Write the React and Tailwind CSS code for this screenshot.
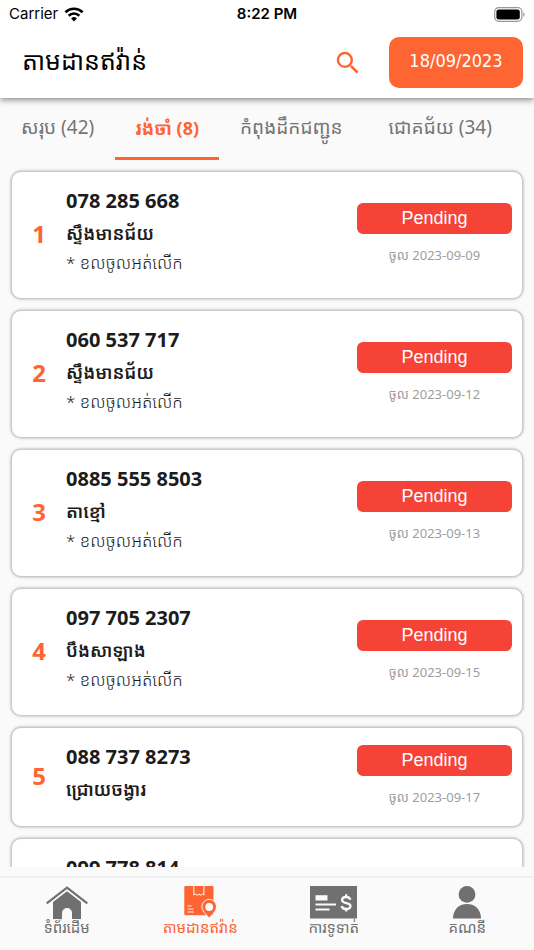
import { MdSearch } from "react-icons/md";

const tabs = [
  { id: "all", label: "សរុប (42)" },
  { id: "pending", label: "រង់ចាំ (8)" },
  { id: "shipping", label: "កំពុងដឹកជញ្ជូន\u00a0" },
  { id: "success", label: "ជោគជ័យ (34)" },
];

const packages = [
  { phone: "078 285 668", place: "ស្ទឹងមានជ័យ", note: "* ខលចូលអត់លើក", date: "2023-09-09" },
  { phone: "060 537 717", place: "ស្ទឹងមានជ័យ", note: "* ខលចូលអត់លើក", date: "2023-09-12" },
  { phone: "0885 555 8503", place: "តាខ្មៅ", note: "* ខលចូលអត់លើក", date: "2023-09-13" },
  { phone: "097 705 2307", place: "បឹងសាឡាង", note: "* ខលចូលអត់លើក", date: "2023-09-15" },
  { phone: "088 737 8273", place: "ជ្រោយចង្វារ", date: "2023-09-17" },
  { phone: "099 778 814", place: "តាខ្មៅ", note: "* ខលចូលអត់លើក", date: "2023-09-17" },
];

function WifiIcon() {
  return (
    <svg viewBox="0 0 20 15" className="h-[15px] w-5" fill="none" stroke="black">
      <path d="M1.4 5.2a12.4 12.4 0 0 1 17.2 0" strokeWidth="2.7" />
      <path d="M4.7 8.7a7.6 7.6 0 0 1 10.6 0" strokeWidth="2.6" />
      <path d="M10 14.6 7.1 11.5a4.2 4.2 0 0 1 5.8 0z" fill="black" stroke="none" />
    </svg>
  );
}

function BatteryIcon() {
  return (
    <svg viewBox="0 0 32 15" className="h-[15px] w-8">
      <rect x="0.7" y="0.7" width="27.2" height="13.6" rx="4" fill="none" stroke="#999" strokeWidth="1.2" />
      <rect x="2.4" y="2.4" width="23.4" height="10.2" rx="2.4" fill="black" />
      <path d="M29.3 5.2c1.8.7 1.8 3.9 0 4.6z" fill="#999" />
    </svg>
  );
}

function HomeIcon() {
  return (
    <svg viewBox="0 0 42 33" className="h-[33px] w-[42px]">
      <path d="M.7 17.4 21 1.7l20.3 15.7" fill="none" stroke="currentColor" strokeWidth="2.2" />
      <path d="M7 16 21 5.2 35 16v17h-9v-6a5 5 0 0 0-10 0v6H7z" fill="currentColor" />
    </svg>
  );
}

function PackageIcon() {
  return (
    <svg viewBox="0 0 33 33" className="h-[33px] w-[33px]">
      <rect x="0.3" y="0" width="29.2" height="29.3" rx="1.2" fill="currentColor" />
      <path d="M9.8 0v9l1.7-1 1.7 1.4L15 8l1.7 1.4L18.400 8l1.500 1V0" fill="none" stroke="#fafafa" strokeWidth="1" />
      <path d="M3.5 20h4M3.5 23h6M3.5 26H10" stroke="#fafafa" strokeWidth="1" />
      <path
        d="M25.200 13.300a7.300 7.300 0 0 1 7.300 7.300c0 4.400-4.300 7.700-7.300 11.700-3-4-7.300-7.300-7.300-11.700a7.300 7.300 0 0 1 7.300-7.300z"
        fill="currentColor"
        stroke="#fafafa"
        strokeWidth="1"
      />
      <circle cx="25.2" cy="21" r="3.900" fill="#fafafa" />
    </svg>
  );
}

function PaymentIcon() {
  return (
    <svg viewBox="0 0 47 33" className="h-[33px] w-[47px]">
      <path d="M0 0h47v32.5H0z" fill="currentColor" />
      <path d="M5.5 9.2h12v5.3h-12z" fill="#fafafa" />
      <path d="M5.5 18.5H26M5.5 23.6h14" stroke="#fafafa" strokeWidth="2" />
      <path
        d="M40.3 13.8c-.4-1.800-1.900-2.800-4-2.800-2.500 0-4.200 1.200-4.200 3 0 4.300 8.400 2 8.400 6 0 1.900-1.800 3-4.300 3s-4.200-1.100-4.500-3M36.200 8.200V11M36.200 23v2.600"
        fill="none"
        stroke="#fafafa"
        strokeWidth="2.3"
      />
    </svg>
  );
}

function AccountIcon() {
  return (
    <svg viewBox="0 0 28 33" className="h-[33px] w-7" fill="currentColor">
      <circle cx="14" cy="8.4" r="8.4" />
      <path d="M0 32.5C0 24 5.5 18 14 18s14 6 14 14.5z" />
    </svg>
  );
}

const navItems = [
  { id: "home", label: "ទំព័រដើម", Icon: HomeIcon },
  { id: "tracking", label: "តាមដានឥវ៉ាន់", Icon: PackageIcon },
  { id: "payment", label: "ការទូទាត់", Icon: PaymentIcon },
  { id: "account", label: "គណនី", Icon: AccountIcon },
];

function PackageCard({ number, phone, place, note, date }) {
  return (
    <li className="flex shrink-0 items-center rounded-[10px] border border-[#cacaca] bg-white pr-[10px] shadow-[0_0_3px_rgba(0,0,0,0.35)]">
      <span className="w-[54px] shrink-0 pb-[2px] text-center text-2xl font-bold text-[#ff6433]">{number}</span>
      <div className="min-w-0 flex-1 pt-[13px] pb-[21px] text-[#1c1c1c]">
        <p className="text-xl leading-[32px] font-bold">{phone}</p>
        <p className="text-lg leading-[32px] font-semibold">{place}</p>
        {note && <p className="text-[17px] leading-[28px] font-light">{note}</p>}
      </div>
      <div className="flex w-[155px] shrink-0 flex-col gap-[11px] pb-[2px] text-center">
        <span className="rounded-md bg-[#f64337] font-['Liberation_Sans',sans-serif] text-lg leading-[31px] text-white">
          Pending
        </span>
        <span className="text-[13px] leading-[20px] text-[#9e9e9e]">ចូល {date}</span>
      </div>
    </li>
  );
}

export default function App() {
  const activeTab = "pending";
  const activeNav = "tracking";

  return (
    <div className="flex h-screen flex-col bg-[#fafafa] font-['Noto_Sans','Noto_Sans_Khmer',sans-serif]">
      <header className="relative z-10 shrink-0 bg-white shadow-[0_2px_6px_rgba(0,0,0,0.45)]">
        <div className="grid grid-cols-3 items-center px-2 pt-1 pb-px font-['Inter',sans-serif] text-[15px] leading-[20px]">
          <span className="flex items-center gap-1.5 pl-px">
            Carrier
            <WifiIcon />
          </span>
          <span className="text-center font-semibold">8:22 PM</span>
          <span className="flex justify-end">
            <BatteryIcon />
          </span>
        </div>
        <div className="flex items-center pt-3 pr-[11px] pb-[10px] pl-[22px]">
          <h1 className="flex-1 pb-1 text-[25px]">តាមដានឥវ៉ាន់</h1>
          <button type="button" aria-label="Search" className="mr-[26px] text-[#ff6433]">
            <MdSearch size={30} />
          </button>
          <button
            type="button"
            className="h-[51px] w-[134px] rounded-[10px] bg-[#ff6433] pb-1 font-['DejaVu_Sans_Condensed','Noto_Sans',sans-serif] text-lg text-white"
          >
            18/09/2023
          </button>
        </div>
      </header>

      <nav className="flex h-[62px] shrink-0 gap-px pl-px">
        {tabs.map((tab) => (
          <button
            key={tab.id}
            type="button"
            className={[
              "border-b-3 px-5 whitespace-nowrap",
              tab.id === activeTab
                ? "border-[#ff6433] text-lg font-bold text-[#ff6433]"
                : "border-transparent text-[19px] text-[#757575]",
            ].join(" ")}
          >
            {tab.label}
          </button>
        ))}
      </nav>

      <ul className="flex min-h-0 flex-1 flex-col gap-[11px] overflow-hidden px-[11px] pt-[11px]">
        {packages.map((item, i) => (
          <PackageCard key={item.phone} number={i + 1} {...item} />
        ))}
      </ul>

      <nav className="mt-[9px] flex shrink-0 border-t-2 border-[#f0f0f0] pt-2">
        {navItems.map(({ id, label, Icon }) => (
          <a
            key={id}
            href={"#" + id}
            className={[
              "flex h-16 flex-1 flex-col items-center text-[15px] leading-[16px]",
              id === activeNav ? "text-[#ff6433]" : "text-[#707070]",
            ].join(" ")}
          >
            <Icon />
            {label}
          </a>
        ))}
      </nav>
    </div>
  );
}
